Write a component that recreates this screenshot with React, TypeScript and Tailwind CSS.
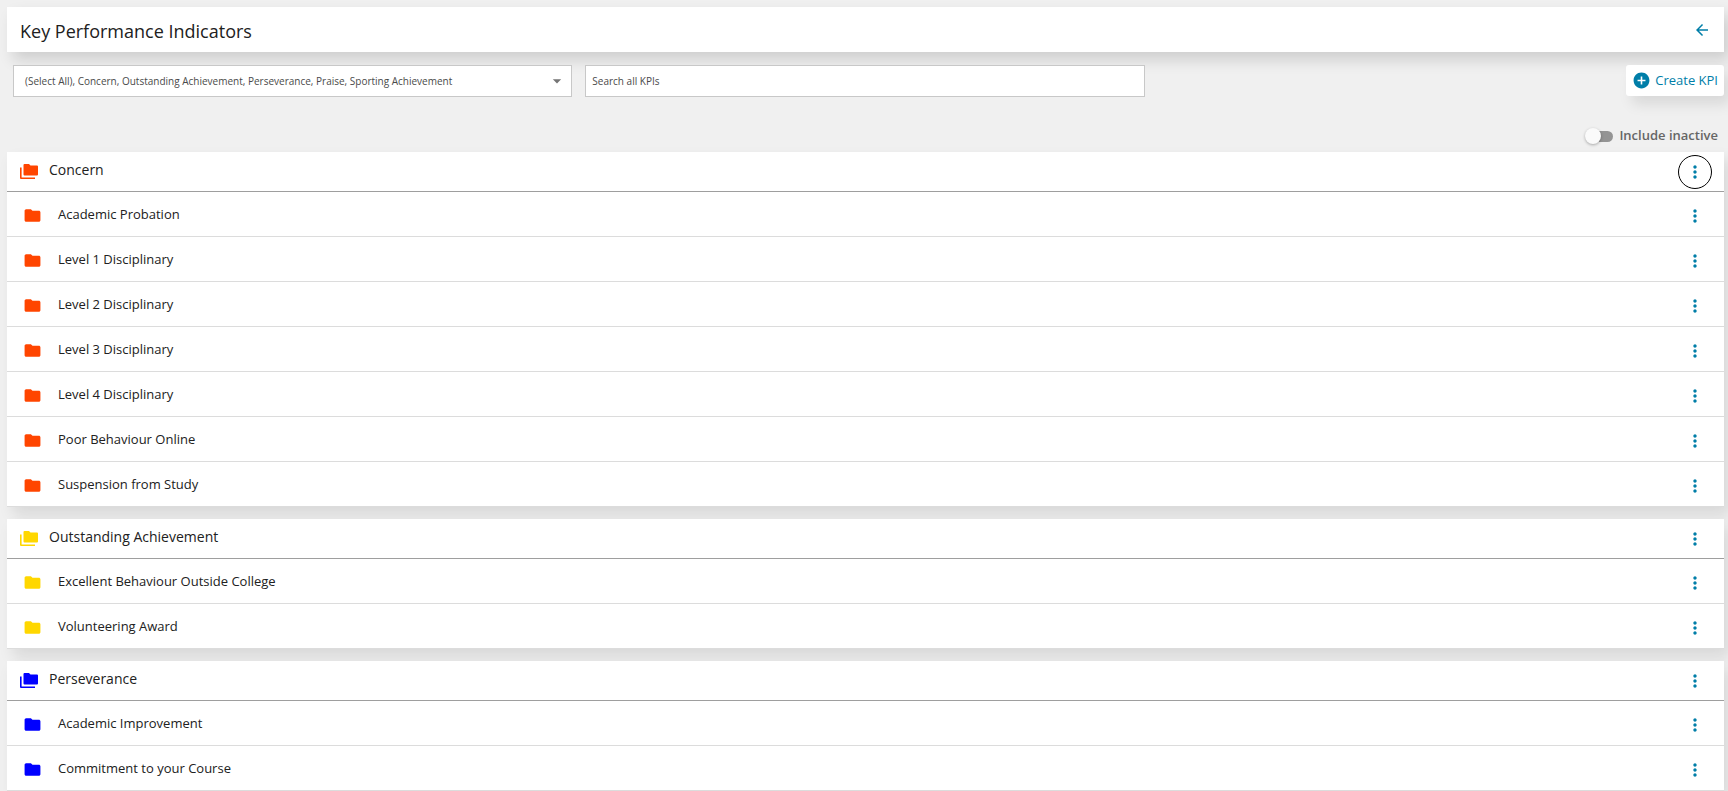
import { useState } from "react";
import { MdAddCircle, MdArrowBack, MdArrowDropDown, MdFolder, MdMoreVert } from "react-icons/md";

type KpiGroup = {
  name: string;
  color: string;
  items: string[];
};

const groups: KpiGroup[] = [
  {
    name: "Concern",
    color: "text-[#ff4500]",
    items: [
      "Academic Probation",
      "Level 1 Disciplinary",
      "Level 2 Disciplinary",
      "Level 3 Disciplinary",
      "Level 4 Disciplinary",
      "Poor Behaviour Online",
      "Suspension from Study",
    ],
  },
  {
    name: "Outstanding Achievement",
    color: "text-[#ffd700]",
    items: ["Excellent Behaviour Outside College", "Volunteering Award"],
  },
  {
    name: "Perseverance",
    color: "text-[#0000ff]",
    items: ["Academic Improvement", "Commitment to your Course"],
  },
];

const selectedTypes = "(Select All), Concern, Outstanding Achievement, Perseverance, Praise, Sporting Achievement";

function FoldersIcon({ className }: { className: string }) {
  return (
    <svg viewBox="0 0 18 16" width="18" height="16" fill="currentColor" className={className} aria-hidden="true">
      <path d="M0 3.500h1.600V13.400H15V15H1A1 1 0 0 1 0 14z" />
      <path d="M4.500 0H9l1.500 1.500h6.500A1 1 0 0 1 18 2.500v8a1 1 0 0 1-1 1H4.500a1 1 0 0 1-1-1V1A1 1 0 0 1 4.500 0z" />
    </svg>
  );
}

function MenuButton({ label, active = false }: { label: string; active?: boolean }) {
  return (
    <button
      type="button"
      aria-label={`Options for ${label}`}
      className={`flex size-[34px] cursor-pointer items-center justify-center rounded-full border text-[#007ea8] ${
        active ? "border-black" : "border-transparent"
      }`}
    >
      <MdMoreVert size={20} />
    </button>
  );
}

function GroupCard({ group, active }: { group: KpiGroup; active: boolean }) {
  return (
    <section className="bg-white shadow-[6px_8px_14px_rgba(0,0,0,0.1)]">
      <div className="flex h-10 items-center border-b border-[#9e9e9e] pt-px pr-3 pl-[13px]">
        <FoldersIcon className={group.color} />
        <h2 className="ml-[11px] flex-1 pb-1 text-sm text-[#212121]">{group.name}</h2>
        <MenuButton label={group.name} active={active} />
      </div>
      <ul>
        {group.items.map((item) => (
          <li key={item} className="flex h-[45px] items-center border-b border-[#dcdcdc] pt-[3px] pr-3 pl-4">
            <MdFolder size={19} className={group.color} />
            <span className="ml-4 flex-1 pb-px text-[13px] text-[#212121]">{item}</span>
            <MenuButton label={item} />
          </li>
        ))}
      </ul>
    </section>
  );
}

export default function App() {
  const [search, setSearch] = useState("");
  const [includeInactive, setIncludeInactive] = useState(false);

  return (
    <div className="h-screen overflow-hidden bg-[#f0f0f0] pt-[7px] pr-1 pl-[7px] font-['Open_Sans',sans-serif]">
      {/* HEADER */}
      <header className="flex h-[45px] items-center justify-between bg-white pr-[13px] pl-[13px] shadow-[6px_8px_14px_rgba(0,0,0,0.14)]">
        <h1 className="pt-0.5 text-lg text-[#212121]">Key Performance Indicators</h1>
        <button type="button" aria-label="Back" className="cursor-pointer text-[#007ea8]">
          <MdArrowBack size={18} />
        </button>
      </header>

      {/* FILTERS */}
      <div className="mt-[13px] flex items-start">
        <div className="grid w-2/3 grid-cols-2 gap-[13px] pr-[7px] pl-[6px]">
          <button
            type="button"
            aria-haspopup="listbox"
            className="flex h-8 cursor-pointer items-center justify-between border border-[#c8c8c8] bg-white pr-1 pl-[11px] text-[10px] text-[#4a4a4a]"
          >
            <span>{selectedTypes}</span>
            <MdArrowDropDown size={20} className="text-[#757575]" />
          </button>
          <input
            type="text"
            aria-label="Search all KPIs"
            placeholder="Search all KPIs"
            value={search}
            onChange={(e) => setSearch(e.target.value)}
            className="h-8 border border-[#c8c8c8] bg-white px-[6px] text-[10px] text-[#4a4a4a] outline-none placeholder:text-[#4a4a4a]"
          />
        </div>
        <button
          type="button"
          className="ml-auto flex h-[31px] cursor-pointer items-center gap-1 rounded-[3px] bg-white px-[6px] text-[13px] text-[#007ea8] shadow-[6px_8px_14px_rgba(0,0,0,0.1)]"
        >
          <MdAddCircle size={19} />
          Create KPI
        </button>
      </div>

      {/* INACTIVE TOGGLE */}
      <div className="mt-[29px] flex justify-end pr-[6px]">
        <label className="flex h-5 cursor-pointer items-center gap-[6px] text-[13px] font-semibold text-[#666]">
          <input
            type="checkbox"
            role="switch"
            checked={includeInactive}
            onChange={(e) => setIncludeInactive(e.target.checked)}
            className="peer sr-only"
          />
          <span className="flex h-[11px] w-7 items-center rounded-full bg-linear-to-r from-transparent from-30% to-[#949494] to-30% peer-checked:justify-end">
            <span className="size-4 rounded-full bg-[#fafafa] shadow-[0_1px_3px_rgba(0,0,0,0.3)]" />
          </span>
          Include inactive
        </label>
      </div>

      {/* KPI GROUPS */}
      <main className="mt-[6px] flex flex-col gap-3">
        {groups.map((group, index) => (
          <GroupCard key={group.name} group={group} active={index === 0} />
        ))}
      </main>
    </div>
  );
}
